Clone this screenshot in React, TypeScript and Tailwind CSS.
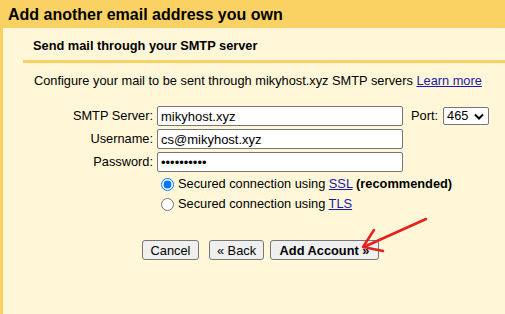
import React from 'react';

const App = () => {
  return (
    <div className="relative w-[505px] h-[314px] overflow-hidden bg-[#fad163] font-['Liberation_Sans',Arial,sans-serif] text-black flex flex-col">
      <div className="h-[28px] pl-[8px] text-[16px] leading-[30px] font-bold shrink-0">
        Add another email address you own
      </div>

      <div className="ml-[3px] flex-1 bg-[#fff7d7]">
        <div className="pl-[30px] pt-[10px] text-[12.8px] leading-[15px] font-bold">
          Send mail through your SMTP server
        </div>
        <div className="ml-[20px] mt-[7px] h-[3px] bg-[#fad163]" />

        <div className="pl-[31px] mt-[10px] text-[12.8px] leading-[15px]">
          Configure your mail to be sent through mikyhost.xyz SMTP servers{' '}
          <a href="#" className="text-[#1a1aa6] underline">Learn more</a>
        </div>

        {/* form rows */}
        <div className="mt-[18px] flex flex-col gap-[3px] text-[12.8px]">
          <div className="flex items-center">
            <label className="w-[150px] text-right">SMTP Server:</label>
            <input
              className="ml-[4px] w-[246px] h-[20px] border border-[#767676] rounded-[2px] bg-white px-[3px] text-[13px]"
              defaultValue="mikyhost.xyz"
            />
            <span className="ml-[8px]">Port:</span>
            <div className="ml-[5px] w-[46px] h-[18px] border border-[#767676] rounded-[2px] bg-white flex items-center justify-between pl-[3px] pr-[4px]">
              <span>465</span>
              <svg width="10" height="7" viewBox="0 0 10 7">
                <path d="M1 1.5 L5 5.5 L9 1.5" fill="none" stroke="#000" strokeWidth="2" />
              </svg>
            </div>
          </div>
          <div className="flex items-center">
            <label className="w-[150px] text-right">Username:</label>
            <input
              className="ml-[4px] w-[246px] h-[20px] border border-[#767676] rounded-[2px] bg-white px-[3px] text-[13px]"
              defaultValue="cs@mikyhost.xyz"
            />
          </div>
          <div className="flex items-center">
            <label className="w-[150px] text-right">Password:</label>
            <input
              type="password"
              className="ml-[4px] w-[246px] h-[20px] border border-[#767676] rounded-[2px] bg-white px-[3px] text-[13px]"
              defaultValue="xxxxxxxxxx"
            />
          </div>
        </div>

        <div className="mt-[2px] pl-[158px] text-[12.8px]">
          <label className="h-[20px] flex items-center gap-[4px]">
            <input type="radio" name="sec" defaultChecked className="w-[13px] h-[13px]" />
            <span>
              Secured connection using <a href="#" className="text-[#1a1aa6] underline">SSL</a>{' '}
              <b>(recommended)</b>
            </span>
          </label>
          <label className="h-[20px] flex items-center gap-[4px]">
            <input type="radio" name="sec" className="w-[13px] h-[13px]" />
            <span>
              Secured connection using <a href="#" className="text-[#1a1aa6] underline">TLS</a>
            </span>
          </label>
        </div>

        <div className="mt-[26px] pl-[139px] flex text-[12.8px]">
          <button className="w-[57px] h-[20px] bg-[#efefef] border border-[#767676] rounded-[3px]">Cancel</button>
          <button className="ml-[10px] w-[55px] h-[20px] bg-[#efefef] border border-[#767676] rounded-[3px]">« Back</button>
          <button className="ml-[6px] w-[109px] h-[20px] bg-[#efefef] border border-[#767676] rounded-[3px] font-bold">Add Account »</button>
        </div>
      </div>

      {/* red annotation arrow */}
      <svg className="absolute left-0 top-0 pointer-events-none" width="505" height="314">
        <path d="M426 219 L366 246" stroke="#e8201c" strokeWidth="2.5" strokeLinecap="round" fill="none" />
        <path d="M374 230 L363 247 L383 251" stroke="#e8201c" strokeWidth="2.5" strokeLinejoin="round" strokeLinecap="round" fill="none" />
      </svg>
    </div>
  );
};

export default App;
